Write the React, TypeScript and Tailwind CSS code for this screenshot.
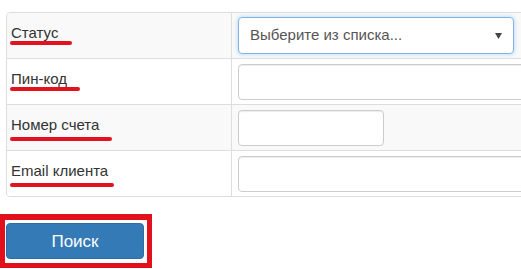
import { ReactNode } from 'react';

type RowProps = {
  label: string;
  lineWidth: number;
  lineOffset: string;
  striped?: boolean;
  first?: boolean;
  children: ReactNode;
};

function Row({ label, lineWidth, lineOffset, striped, first, children }: RowProps) {
  return (
    <div
      className={`flex ${first ? 'h-[45px]' : 'h-[46px] border-t border-[#dddddd]'} ${
        striped ? 'bg-[#f9f9f9]' : 'bg-white'
      }`}
    >
      <div className="w-[225px] shrink-0 border-r border-[#dddddd] pl-[4px] pt-[11px]">
        <div className="text-[15px] leading-[17px] text-[#333333]">{label}</div>
        <div
          className={`h-[4px] ml-[-1px] rounded-full bg-[#e2131f] ${lineOffset}`}
          style={{ width: lineWidth }}
        />
      </div>
      <div className="flex-1 flex items-center pl-[6px]">{children}</div>
    </div>
  );
}

const inputCls =
  'h-[36px] rounded-[4px] border border-[#cccccc] bg-white shadow-[inset_0_1px_1px_rgba(0,0,0,0.075)]';

export default function App() {
  return (
    <div className="w-[521px] h-[269px] overflow-hidden bg-white font-['Liberation_Sans',Arial,sans-serif]">
      <div className="pt-[12px] pl-[6px]">
        <div className="w-[560px] border border-[#dddddd] rounded-[4px] overflow-hidden">
          <Row label="Статус" lineWidth={62} lineOffset="mt-0" striped first>
            <div className="w-[276px] h-[37px] rounded-[4px] border border-[#80b3e6] bg-white shadow-[0_0_4px_rgba(102,175,233,0.5)] flex items-center justify-between pl-[11px] pr-[11px]">
              <span className="text-[15px] text-[#555555]">Выберите из списка...</span>
              <svg width="7" height="6" viewBox="0 0 7 6">
                <path d="M0 0 H7 L3.5 6 Z" fill="#444444" />
              </svg>
            </div>
          </Row>
          <Row label="Пин-код" lineWidth={70} lineOffset="mt-0">
            <div className={`${inputCls} w-[320px]`} />
          </Row>
          <Row label="Номер счета" lineWidth={102} lineOffset="mt-[4px]" striped>
            <div className={`${inputCls} w-[146px] h-[35px]`} />
          </Row>
          <Row label="Email клиента" lineWidth={104} lineOffset="mt-[4px]">
            <div className={`${inputCls} w-[320px]`} />
          </Row>
        </div>
      </div>
      <div className="mt-[17px] w-[152px] h-[54px] border-[5px] border-t-[6px] border-[#e2101c] pl-[1px] pt-[3px]">
        <button className="w-[138px] h-[36px] rounded-[4px] bg-[#337ab7] border border-[#2e6da4] text-white text-[17px] leading-none">
          Поиск
        </button>
      </div>
    </div>
  );
}
